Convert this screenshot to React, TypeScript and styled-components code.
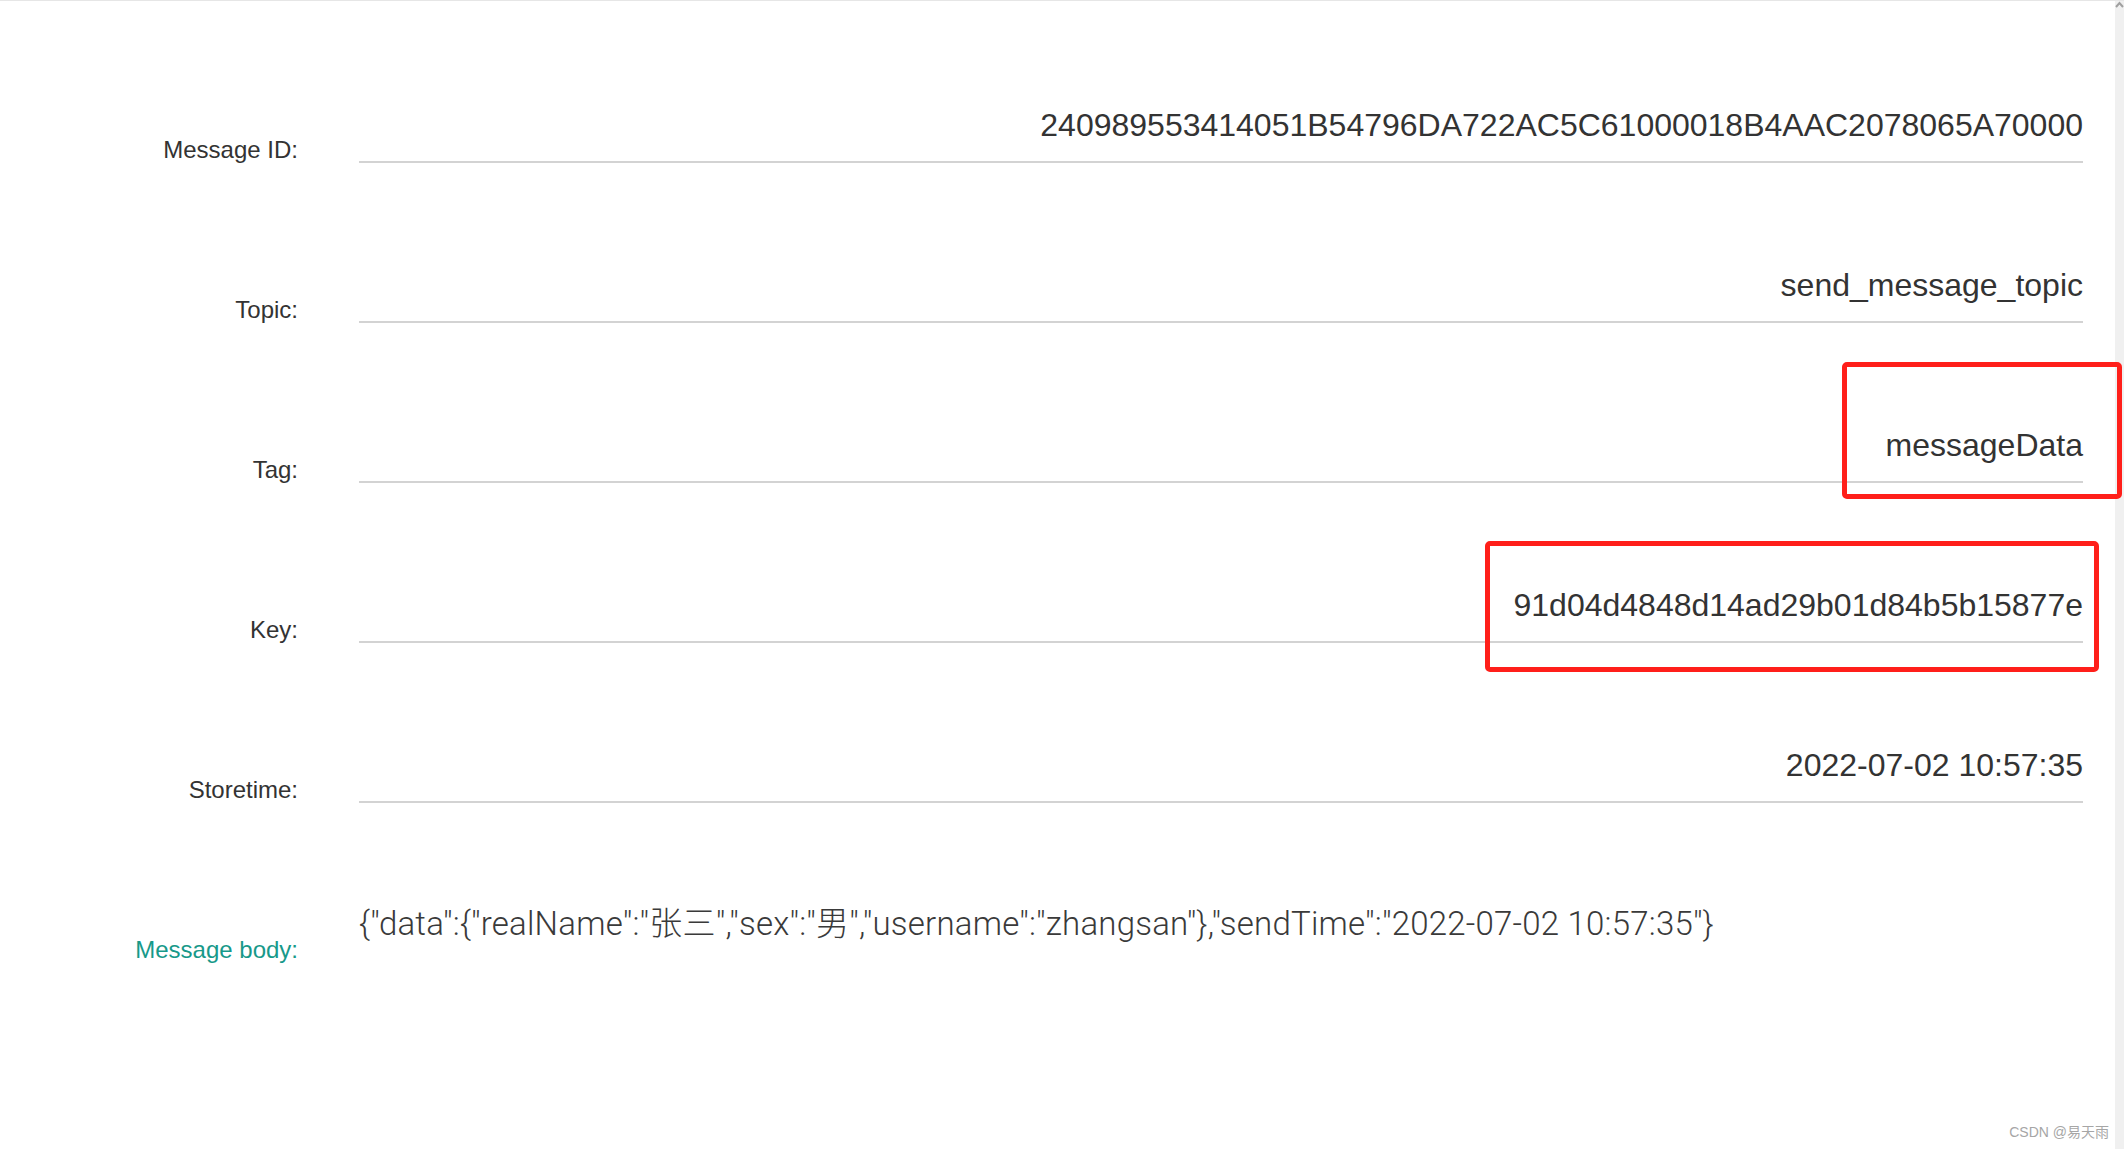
import styled, { createGlobalStyle } from "styled-components";

const GlobalStyle = createGlobalStyle`
  html, body {
    margin: 0;
    padding: 0;
    background: #ffffff;
  }
  body {
    font-family: "Liberation Sans", Arial, "Noto Sans CJK SC", sans-serif;
    color: #333333;
  }
`;

const Page = styled.div`
  display: flex;
  width: 2124px;
  height: 1149px;
  box-sizing: border-box;
  border-top: 1px solid #e6e6e6;
  overflow: hidden;
  position: relative;
`;

const Content = styled.div`
  flex: 1;
  display: flex;
  flex-direction: column;
  padding: 2px 32px 0 0;
`;

const Row = styled.div`
  display: grid;
  grid-template-columns: 298px 1fr;
  column-gap: 61px;
  align-items: end;
  height: 160px;
`;

const Label = styled.div<{ accent?: boolean }>`
  text-align: right;
  font-size: 24px;
  line-height: 28px;
  margin-bottom: -1px;
  white-space: nowrap;
  color: ${(props) => (props.accent ? "#17998a" : "#333333")};
`;

const Value = styled.div`
  position: relative;
  text-align: right;
  font-size: 32px;
  line-height: 36px;
  padding-bottom: 18px;
  border-bottom: 2px solid #d3d3d3;
  white-space: nowrap;
`;

const Body = styled.div`
  align-self: start;
  margin-top: 101px;
  font-family: "Roboto", "Noto Sans CJK SC", sans-serif;
  font-weight: 300;
  font-size: 33px;
  line-height: 40px;
  letter-spacing: 0.22px;
  color: #3a3a3a;
  white-space: nowrap;
`;

const Highlight = styled.div<{ top: number; right: number; w: number; h: number }>`
  position: absolute;
  top: ${(props) => props.top}px;
  right: ${(props) => props.right}px;
  width: ${(props) => props.w}px;
  height: ${(props) => props.h}px;
  box-sizing: border-box;
  border: 5px solid #ff1f1a;
  border-radius: 5px;
  pointer-events: none;
`;

const Scrollbar = styled.div`
  width: 9px;
  flex: none;
  background: #f0f0f0;
  display: flex;
  justify-content: center;
`;

const Watermark = styled.div`
  position: absolute;
  right: 15px;
  bottom: 9px;
  font-family: "Liberation Sans", "Noto Sans CJK SC", sans-serif;
  font-size: 14px;
  line-height: 16px;
  color: #a6a6a6;
`;

const rows = [
  { label: "Message ID:", value: "240989553414051B54796DA722AC5C61000018B4AAC2078065A70000" },
  { label: "Topic:", value: "send_message_topic" },
  { label: "Tag:", value: "messageData", box: { top: -65, right: -39, w: 280, h: 137 } },
  { label: "Key:", value: "91d04d4848d14ad29b01d84b5b15877e", box: { top: -46, right: -16, w: 614, h: 131 } },
  { label: "Storetime:", value: "2022-07-02 10:57:35" },
];

const App = () => {
  return (
    <>
      <GlobalStyle />
      <Page>
        <Content>
          {rows.map((row) => (
            <Row key={row.label}>
              <Label>{row.label}</Label>
              <Value>
                {row.value}
                {row.box && (
                  <Highlight top={row.box.top} right={row.box.right} w={row.box.w} h={row.box.h} />
                )}
              </Value>
            </Row>
          ))}
          <Row>
            <Label accent>Message body:</Label>
            <Body>
              {'{"data":{"realName":"张三","sex":"男","username":"zhangsan"},"sendTime":"2022-07-02 10:57:35"}'}
            </Body>
          </Row>
        </Content>
        <Scrollbar>
          <svg width="9" height="8" viewBox="0 0 9 8">
            <path d="M1 6 L4.5 2 L8 6" fill="none" stroke="#a0a0a0" strokeWidth="2" />
          </svg>
        </Scrollbar>
        <Watermark>CSDN @易天雨</Watermark>
      </Page>
    </>
  );
};

export default App;
